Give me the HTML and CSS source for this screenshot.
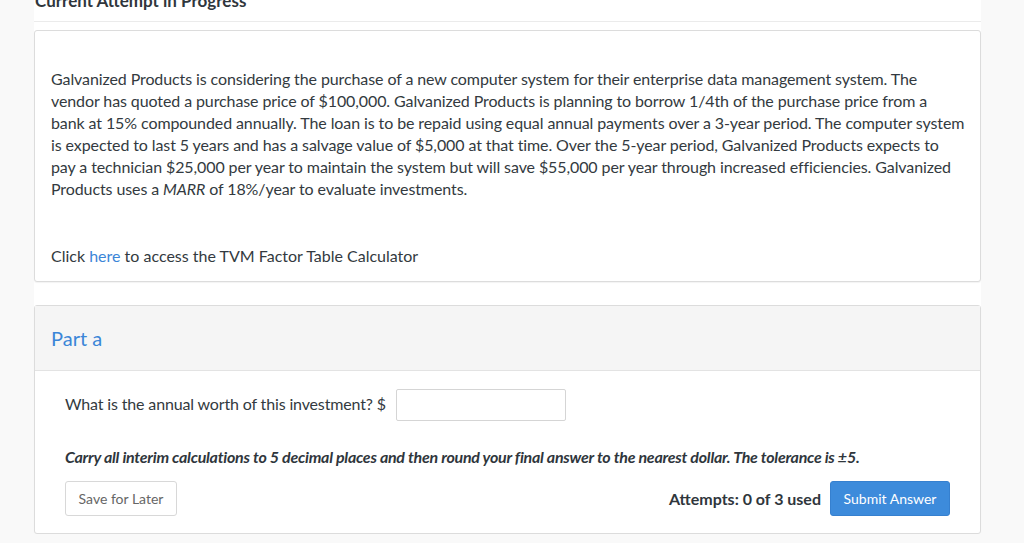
FILE: index.html
```html
<!DOCTYPE html>
<html>
<head>
<meta charset="utf-8">
<link rel="stylesheet" href="styles.css">
</head>
<body>
<div class="page">
  <main class="column">
    <h2 class="attempt-title">Current Attempt in Progress</h2>
    <section class="card question-card">
      <p class="problem">Galvanized Products is considering the purchase of a new computer system for their enterprise data management system. The<br>vendor has quoted a purchase price of $100,000. Galvanized Products is planning to borrow 1/4th of the purchase price from a<br>bank at 15% compounded annually. The loan is to be repaid using equal annual payments over a 3-year period. The computer system<br>is expected to last 5 years and has a salvage value of $5,000 at that time. Over the 5-year period, Galvanized Products expects to<br>pay a technician $25,000 per year to maintain the system but will save $55,000 per year through increased efficiencies. Galvanized<br>Products uses a <em>MARR</em> of 18%/year to evaluate investments.</p>
      <p class="tvm">Click <a href="#" class="link">here</a> to access the TVM Factor Table Calculator</p>
    </section>
    <section class="card part-card">
      <header class="part-head">Part a</header>
      <div class="part-body">
        <div class="question-row">
          <span>What is the annual worth of this investment? $</span>
          <input class="answer" type="text">
        </div>
        <p class="note">Carry all interim calculations to 5 decimal places and then round your final answer to the nearest dollar. The tolerance is ±5.</p>
        <div class="actions">
          <button class="btn btn-save">Save for Later</button>
          <div class="right-actions">
            <span class="attempts">Attempts: 0 of 3 used</span>
            <button class="btn btn-submit">Submit Answer</button>
          </div>
        </div>
      </div>
    </section>
  </main>
</div>
</body>
</html>
```
FILE: styles.css
```css
html, body {
  margin: 0;
  padding: 0;
  background: #f9f9f9;
  font-family: Lato, "Open Sans", sans-serif;
  color: #333a40;
  overflow: hidden;
}
.page {
  height: 543px;
  padding-left: 34px;
}
.column {
  width: 947px;
  background: #fff;
  height: 100%;
}
.attempt-title {
  margin: -9px 0 8px 0;
  padding: 0 0 0 1px;
  font-size: 17px;
  font-weight: 700;
  line-height: 20px;
  height: 31px;
  box-sizing: border-box;
  color: #2f363c;
  border-bottom: 1px solid #ebebeb;
}
.card {
  border: 1px solid #dcdcdc;
  border-radius: 3px;
  box-shadow: 0 1px 1px rgba(0,0,0,0.05);
  background: #fff;
}
.question-card {
  padding: 37px 8px 14px 16px;
  margin-bottom: 23px;
}
.problem {
  margin: 0 0 45px 0;
  font-size: 16px;
  line-height: 22px;
  letter-spacing: -0.1px;
}
.tvm {
  margin: 0;
  font-size: 16px;
  line-height: 22px;
}
.link {
  color: #3b86d8;
  text-decoration: none;
}
.part-head {
  background: #f5f5f5;
  border-bottom: 1px solid #e3e3e3;
  height: 64px;
  line-height: 64px;
  padding-left: 16px;
  font-size: 20px;
  color: #3b86d8;
}
.part-body {
  padding: 18px 30px 17px 30px;
}
.question-row {
  display: flex;
  align-items: center;
  gap: 10px;
  font-size: 16px;
  letter-spacing: -0.15px;
  line-height: 20px;
}
.question-row span {
  padding-bottom: 3px;
}
.answer {
  width: 170px;
  height: 32px;
  box-sizing: border-box;
  border: 1px solid #d5d5d5;
  border-radius: 2px;
  margin: 0;
}
.note {
  margin: 25px 0 13px 0;
  font-size: 16px;
  font-weight: 700;
  font-style: italic;
  letter-spacing: -0.25px;
  line-height: 22px;
  color: #2f363c;
}
.actions {
  display: flex;
  justify-content: space-between;
  align-items: center;
}
.right-actions {
  display: flex;
  align-items: center;
  gap: 9px;
}
.attempts {
  font-size: 16px;
  font-weight: 700;
  color: #2f363c;
}
.btn {
  font-family: Lato, "Open Sans", sans-serif;
  font-size: 14px;
  height: 35px;
  border-radius: 3px;
  padding: 0 12px;
  cursor: pointer;
}
.btn-save {
  background: #fff;
  border: 1px solid #d8d8d8;
  color: #666;
  width: 112px;
}
.btn-submit {
  background: #3d8bdb;
  border: 1px solid #3680cf;
  color: #fff;
  width: 120px;
}
```
